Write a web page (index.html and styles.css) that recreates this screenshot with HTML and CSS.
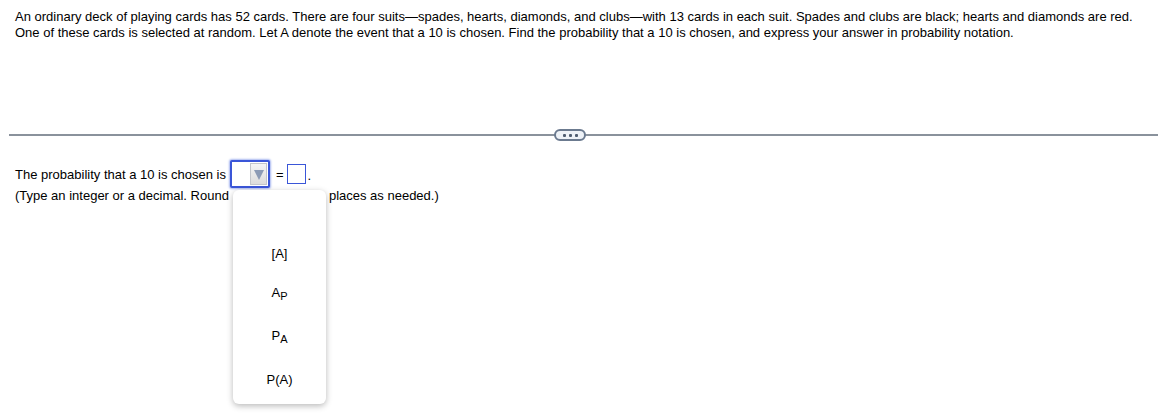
FILE: index.html
```html
<!DOCTYPE html>
<html>
<head>
<meta charset="utf-8">
<link rel="stylesheet" href="styles.css">
</head>
<body>
<div class="question">
  <p>An ordinary deck of playing cards has 52 cards. There are four suits—spades, hearts, diamonds, and clubs—with 13 cards in each suit. Spades and clubs are black; hearts and diamonds are red.<br>One of these cards is selected at random. Let A denote the event that a 10 is chosen. Find the probability that a 10 is chosen, and express your answer in probability notation.</p>
</div>
<div class="divider">
  <span class="more"><i></i><i></i><i></i></span>
</div>
<div class="answer">
  <div class="row">
    <span>The probability that a 10 is chosen is</span>
    <span class="select"><span class="arrow"></span></span>
    <span class="eq">=</span>
    <span class="box"></span><span class="dot">.</span>
  </div>
  <div class="row2">(Type an integer or a decimal. Round <span class="gap"></span>places as needed.)</div>
  <div class="menu">
    <div class="item blank"></div>
    <div class="item i1"><span>[A]</span></div>
    <div class="item i2"><span>A<sub>P</sub></span></div>
    <div class="item i3"><span>P<sub>A</sub></span></div>
    <div class="item i4"><span>P(A)</span></div>
  </div>
</div>
</body>
</html>
```
FILE: styles.css
```css
html {
  min-height: 100%;
}
body {
  margin: 0;
  min-height: 413px;
  font-family: "Liberation Sans", Arial, sans-serif;
  font-size: 13px;
  color: #000;
  background: #fff;
}
.question {
  padding: 9px 15px 0 15px;
}
.question p {
  margin: 0;
  line-height: 16px;
}
.divider {
  margin: 93px 9px 0 9px;
  height: 2px;
  background: #8a929c;
  position: relative;
}
.more {
  position: absolute;
  top: -5px;
  left: 545px;
  width: 28px;
  height: 8px;
  border: 2px solid #6b7a8f;
  border-radius: 6px;
  background: #eef2f7;
  display: flex;
  align-items: center;
  justify-content: center;
  gap: 3px;
}
.more i {
  width: 3px;
  height: 3px;
  background: #4f5d70;
  border-radius: 1px;
}
.answer {
  padding: 23px 15px 0 15px;
  position: relative;
}
.row {
  display: flex;
  align-items: center;
  height: 30px;
}
.select {
  display: block;
  box-sizing: border-box;
  width: 40px;
  height: 28px;
  margin-left: 4px;
  border: 2px solid #3a56d8;
  box-shadow: 0 0 2px 1px #a9b8f0;
  border-radius: 2px;
  background: #fff;
  position: relative;
}
.arrow {
  position: absolute;
  right: 1px;
  top: 1px;
  width: 17px;
  height: 22px;
  box-sizing: border-box;
  border: 1px solid #c3c6cb;
  background: linear-gradient(#f5f5f5, #dcdcdc);
}
.arrow::after {
  content: "";
  position: absolute;
  left: 3px;
  top: 6px;
  border-left: 5px solid transparent;
  border-right: 5px solid transparent;
  border-top: 10px solid #8c9bb5;
}
.menu {
  position: absolute;
  top: 54px;
  left: 233px;
  width: 93px;
  box-sizing: border-box;
  padding: 4px 0 5px 0;
  background: #fff;
  border-radius: 6px;
  box-shadow: 0 2px 6px rgba(0,0,0,0.28);
  z-index: 5;
}
.item {
  display: flex;
  align-items: center;
  justify-content: center;
}
.blank { height: 40px; }
.i1 { height: 39px; }
.i2 { height: 39px; }
.i3 { height: 47px; }
.i4 { height: 40px; }
.item sub {
  font-size: 11px;
  vertical-align: -3px;
  line-height: 0;
}
.eq {
  margin-left: 6px;
}
.box {
  display: inline-block;
  box-sizing: border-box;
  width: 19px;
  height: 20px;
  border: 1px solid #3a56d8;
  margin-left: 3px;
}
.dot {
  margin-left: 2px;
  align-self: flex-end;
  margin-bottom: 6px;
}
.row2 {
  line-height: 16px;
  margin-top: -1px;
  display: flex;
}
.gap {
  display: inline-block;
  width: 100px;
}
```
